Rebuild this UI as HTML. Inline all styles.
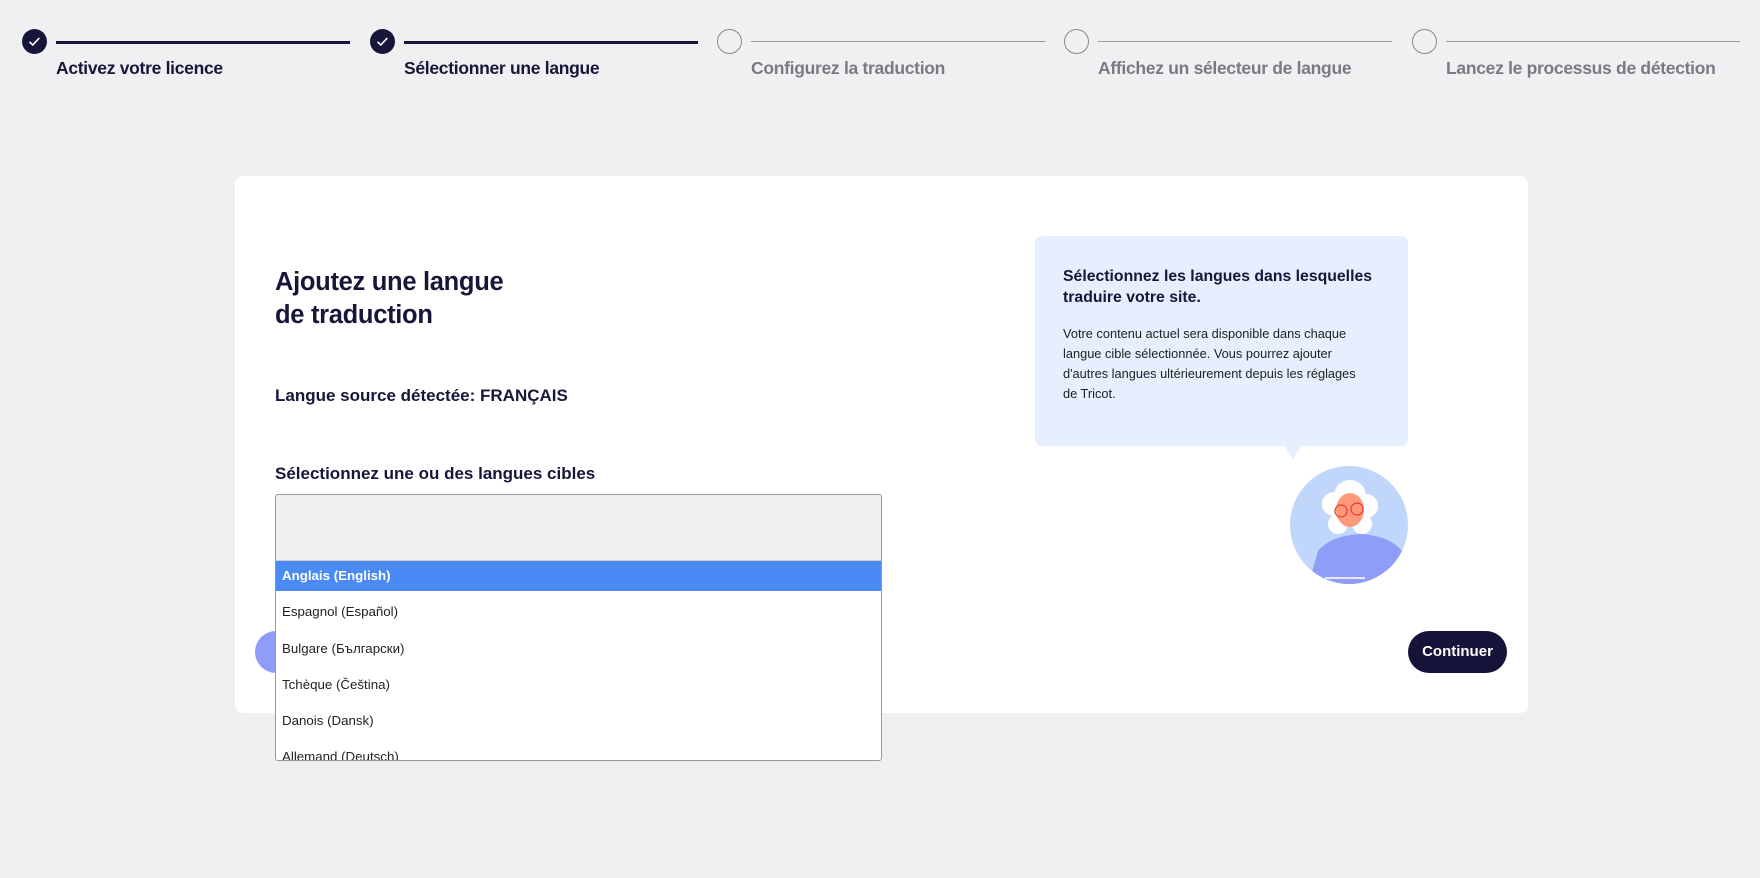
<!DOCTYPE html>
<html><head><meta charset="utf-8"><style>
*{margin:0;padding:0;box-sizing:border-box}
body{width:1760px;height:878px;background:#efefef;font-family:"Liberation Sans",sans-serif;position:relative;overflow:hidden;color:#16163a}
.panel{position:absolute;left:20px;top:11px;width:1720px;height:702px;background:#f0f0f2}
.abs{position:absolute}
.circ{position:absolute;top:29px;width:25px;height:25px;border-radius:50%}
.done{background:#16163a}
.todo{border:1.3px solid #888;background:#f0f0f2}
.line{position:absolute;top:41px;height:3px;background:#16163a}
.line.t{height:1px;background:#999}
.lbl{position:absolute;top:58px;font-size:17.5px;font-weight:bold;white-space:nowrap;letter-spacing:-0.3px}
.card{position:absolute;left:235px;top:176px;width:1293px;height:537px;background:#fff;border-radius:8px}
.opt{position:absolute;left:6px;font-size:13.3px;color:#222}
</style></head><body>
<div class="panel"></div>

<div class="circ done" style="left:22px"><svg width="25" height="25"><path d="M7.5 12.8l3.3 3.2 6.5-7" stroke="#fff" stroke-width="1.6" fill="none"/></svg></div>
<div class="line" style="left:56px;width:294px"></div>
<div class="lbl" style="left:56px">Activez votre licence</div>

<div class="circ done" style="left:370px"><svg width="25" height="25"><path d="M7.5 12.8l3.3 3.2 6.5-7" stroke="#fff" stroke-width="1.6" fill="none"/></svg></div>
<div class="line" style="left:404px;width:294px"></div>
<div class="lbl" style="left:404px">Sélectionner une langue</div>

<div class="circ todo" style="left:717px"></div>
<div class="line t" style="left:751px;width:294px"></div>
<div class="lbl" style="left:751px;color:#7a7a80">Configurez la traduction</div>

<div class="circ todo" style="left:1064px"></div>
<div class="line t" style="left:1098px;width:294px"></div>
<div class="lbl" style="left:1098px;color:#7a7a80">Affichez un sélecteur de langue</div>

<div class="circ todo" style="left:1412px"></div>
<div class="line t" style="left:1446px;width:294px"></div>
<div class="lbl" style="left:1446px;color:#7a7a80">Lancez le processus de détection</div>

<div class="card"></div>
<div class="abs" style="left:275px;top:266px;font-size:25.5px;font-weight:bold;line-height:33px;letter-spacing:-0.3px">Ajoutez une langue<br>de traduction</div>
<div class="abs" style="left:275px;top:386px;font-size:17px;font-weight:bold">Langue source détectée: FRANÇAIS</div>
<div class="abs" style="left:275px;top:464px;font-size:17px;font-weight:bold">Sélectionnez une ou des langues cibles</div>

<div class="abs" style="left:255px;top:631px;width:60px;height:42px;border-radius:21px;background:#8f9cf8"></div>
<div class="abs" style="left:1408px;top:631px;width:99px;height:42px;border-radius:21px;background:#15133a;color:#fff;font-size:15px;font-weight:bold;text-align:center;line-height:42px">Continuer</div>

<div class="abs" style="left:1035px;top:236px;width:373px;height:210px;background:#e5effd;border-radius:7px"></div>
<div class="abs" style="left:1284px;top:445px;width:0;height:0;border-left:9px solid transparent;border-right:9px solid transparent;border-top:14px solid #e5effd"></div>
<div class="abs" style="left:1063px;top:266px;font-size:15.8px;font-weight:bold;line-height:21px;width:330px">Sélectionnez les langues dans lesquelles traduire votre site.</div>
<div class="abs" style="left:1063px;top:324px;font-size:12.8px;line-height:20px;white-space:nowrap;color:#222">Votre contenu actuel sera disponible dans chaque<br>langue cible sélectionnée. Vous pourrez ajouter<br>d'autres langues ultérieurement depuis les réglages<br>de Tricot.</div>

<svg class="abs" style="left:1290px;top:466px" width="120" height="120" viewBox="0 0 120 120">
<defs><clipPath id="c"><circle cx="59" cy="59" r="59"/></clipPath></defs>
<circle cx="59" cy="59" r="59" fill="#c0d7fb"/>
<g clip-path="url(#c)">
<path d="M18 120 L28 85 Q40 70 70 68 Q105 70 115 90 L118 120Z" fill="#8f9cf8"/>
<circle cx="60" cy="30" r="16" fill="#fff"/><circle cx="44" cy="38" r="12" fill="#fff"/><circle cx="76" cy="40" r="12" fill="#fff"/><circle cx="48" cy="58" r="10" fill="#fff"/><circle cx="72" cy="58" r="10" fill="#fff"/>
<ellipse cx="60" cy="44" rx="14" ry="17" fill="#fe9a7a"/>
<circle cx="51" cy="45" r="6" fill="none" stroke="#e33" stroke-width="1.2"/><circle cx="67" cy="43" r="6" fill="none" stroke="#e33" stroke-width="1.2"/>
<path d="M35 112 H75" stroke="#fff" stroke-width="1.5"/>
</g></svg>

<div class="abs" style="left:275px;top:494px;width:607px;height:267px;border:1px solid #999;border-radius:3px;background:#fff;overflow:hidden">
<div class="abs" style="left:0;top:0;width:100%;height:66px;background:#f0f0f2;border-bottom:1px solid #ccc"></div>
<div class="abs" style="left:0;top:66px;width:100%;height:30px;background:#4a8af4"></div>
<div class="opt" style="top:73px;color:#fff;font-weight:bold">Anglais (English)</div>
<div class="opt" style="top:109px">Espagnol (Español)</div>
<div class="opt" style="top:146px">Bulgare (Български)</div>
<div class="opt" style="top:182px">Tchèque (Čeština)</div>
<div class="opt" style="top:218px">Danois (Dansk)</div>
<div class="opt" style="top:254px">Allemand (Deutsch)</div>
</div>
</body></html>
